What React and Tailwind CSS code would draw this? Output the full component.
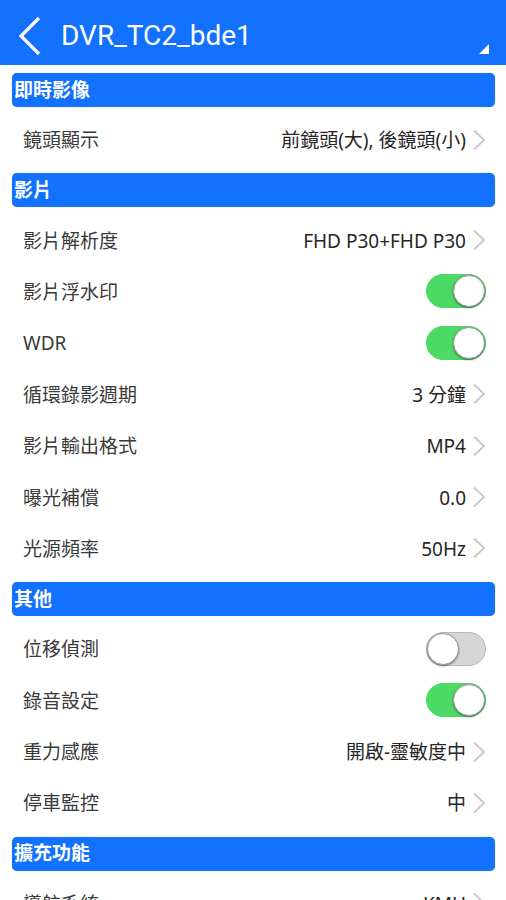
import React from "react";

const font = { fontFamily: 'Roboto, "Noto Sans CJK TC", sans-serif' };
const rowFont = { fontFamily: '"Noto Sans", "Noto Sans CJK TC", sans-serif' };

function Chevron() {
  return (
    <svg width="14" height="22" viewBox="0 0 14 22" className="ml-[6px] shrink-0">
      <path d="M2 1.5 L12 11 L2 20.5" fill="none" stroke="#c8c8cc" strokeWidth="1.8" />
    </svg>
  );
}

function Toggle({ on }) {
  return (
    <div
      className={
        "relative w-[60px] h-[34px] rounded-full " +
        (on ? "bg-[#4cd964] border border-[#4cd964]" : "bg-[#d6d6d6] border border-[#b8b8b8]")
      }
    >
      <div
        className={
          "absolute top-[0px] w-[32px] h-[32px] rounded-full bg-white shadow-[0_1px_2px_rgba(0,0,0,0.45)] border border-[#9a9a9a] " +
          (on ? "right-[0px]" : "left-[0px]")
        }
      />
    </div>
  );
}

function Section({ title }) {
  return (
    <div className="mt-2 mb-[7px] ml-3 mr-[11px] h-[34px] rounded-[5px] bg-[#1271fe] flex items-center pl-[2px] shadow-[0_0_1px_rgba(0,0,0,0.3)]">
      <span className="text-white text-[19px] font-bold leading-none" style={font}>{title}</span>
    </div>
  );
}

function Row({ label, value, toggle }) {
  return (
    <div className="h-[51.4px] flex items-center pl-[23px] pr-[20px]">
      <span className="text-[19px] text-[#3a3a3a] flex-1 leading-none mt-[2px]" style={rowFont}>{label}</span>
      {toggle !== undefined ? (
        <Toggle on={toggle} />
      ) : (
        <div className="flex items-center">
          <span className="text-[19px] text-[#262626] leading-none mt-[2px]" style={rowFont}>{value}</span>
          <Chevron />
        </div>
      )}
    </div>
  );
}

export default function App() {
  return (
    <div className="w-[506px] h-[900px] overflow-hidden bg-white" style={font}>
      <div className="relative h-[65px] bg-[#1271fe] flex items-center">
        <svg width="26" height="40" viewBox="0 0 26 40" className="ml-[17px] mt-[6px]">
          <path d="M22 2 L4 20 L22 38" fill="none" stroke="white" strokeWidth="3.2" />
        </svg>
        <span className="ml-[18px] mt-[6px] text-white text-[28px] leading-none" style={font}>DVR_TC2_bde1</span>
        <svg width="11" height="11" viewBox="0 0 11 11" className="absolute left-[479px] top-[44px]">
          <polygon points="10,0 10,10 0,10" fill="white" />
        </svg>
      </div>

      <Section title="即時影像" />
      <Row label="鏡頭顯示" value="前鏡頭(大), 後鏡頭(小)" />

      <Section title="影片" />
      <Row label="影片解析度" value="FHD P30+FHD P30" />
      <Row label="影片浮水印" toggle={true} />
      <Row label="WDR" toggle={true} />
      <Row label="循環錄影週期" value="3 分鐘" />
      <Row label="影片輸出格式" value="MP4" />
      <Row label="曝光補償" value="0.0" />
      <Row label="光源頻率" value="50Hz" />

      <Section title="其他" />
      <Row label="位移偵測" toggle={false} />
      <Row label="錄音設定" toggle={true} />
      <Row label="重力感應" value="開啟-靈敏度中" />
      <Row label="停車監控" value="中" />

      <Section title="擴充功能" />
      <Row label="導航系統" value="KMH" />
    </div>
  );
}
